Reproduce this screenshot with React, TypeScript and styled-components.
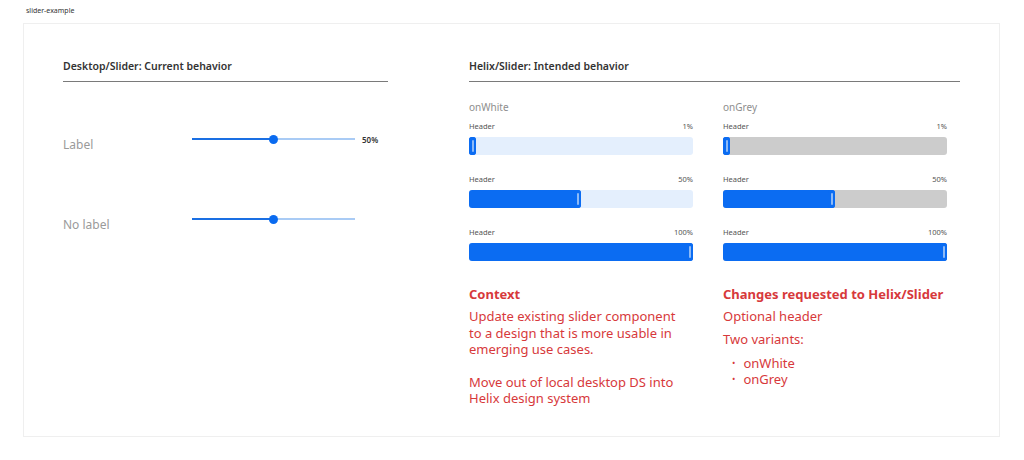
import React from 'react'
import styled, { createGlobalStyle } from 'styled-components'

const GlobalStyle = createGlobalStyle`
  html, body {
    margin: 0;
    padding: 0;
    background: #ffffff;
  }
  body {
    font-family: 'Noto Sans', 'Liberation Sans', sans-serif;
    color: #222;
  }
`

const Page = styled.div`
  width: 1024px;
  height: 460px;
  box-sizing: border-box;
  padding: 6px 24px 0 23px;
`

const Caption = styled.div`
  font-size: 7px;
  line-height: 9px;
  color: #333;
  padding-left: 3px;
  margin-bottom: 8px;
`

const Frame = styled.div`
  box-sizing: border-box;
  width: 977px;
  height: 414px;
  border: 1px solid #efefef;
  padding: 35px 39px 0 39px;
  display: flex;
  gap: 81px;
`

const Column = styled.section<{ width: number }>`
  width: ${({ width }) => width}px;
  flex: none;
  display: flex;
  flex-direction: column;
`

const SectionTitle = styled.h2`
  margin: 0;
  font-size: 10.5px;
  line-height: 14px;
  font-weight: 600;
  color: #333;
  padding-bottom: 8px;
  border-bottom: 1px solid #7a7a7a;
`

/* ---- current behaviour ---- */

const DesktopRow = styled.div<{ first?: boolean }>`
  display: flex;
  align-items: center;
  margin-top: ${({ first }) => (first ? '50px' : '66px')};
  height: 14px;
`

const DesktopLabel = styled.div`
  width: 129px;
  font-size: 12px;
  line-height: 14px;
  color: #9a9a9a;
  padding-top: 12px;
`

const DesktopTrack = styled.div`
  width: 163px;
  display: flex;
  align-items: center;
`

const TrackFill = styled.div`
  height: 2px;
  background: #1a6fe3;
`

const TrackRest = styled.div`
  flex: 1;
  height: 2px;
  background: #a9cbf5;
`

const Knob = styled.div`
  width: 9px;
  height: 9px;
  border-radius: 50%;
  background: #0a6bf0;
  margin: 0 -1px;
  position: relative;
  z-index: 1;
`

const DesktopValue = styled.div`
  margin-left: 7px;
  font-size: 8px;
  font-weight: 600;
  color: #333;
`

/* ---- intended behaviour ---- */

const VariantGrid = styled.div`
  display: grid;
  grid-template-columns: 224px 224px;
  column-gap: 30px;
  margin-top: 18px;
`

const Variant = styled.div`
  display: flex;
  flex-direction: column;
`

const VariantName = styled.div`
  font-size: 10px;
  line-height: 14px;
  color: #8e8e8e;
  margin-bottom: 7px;
`

const SliderBlock = styled.div`
  display: flex;
  flex-direction: column;
  gap: 6px;
  & + & {
    margin-top: 19px;
  }
`

const SliderHeader = styled.div`
  display: flex;
  justify-content: space-between;
  font-size: 7.5px;
  line-height: 10px;
  color: #555;
`

const Bar = styled.div<{ tone: 'white' | 'grey' }>`
  height: 18px;
  border-radius: 3px;
  background: ${({ tone }) => (tone === 'white' ? '#e4effd' : '#cccccc')};
  display: flex;
`

const BarFill = styled.div`
  height: 100%;
  border-radius: 3px;
  background: #0b6cf2;
  display: flex;
  justify-content: flex-end;
`

const Thumb = styled.div`
  width: 7px;
  height: 100%;
  box-sizing: border-box;
  border-radius: 3px;
  background: #0b6cf2;
  display: flex;
  align-items: center;
  justify-content: center;
  &::after {
    content: '';
    width: 2px;
    height: 12px;
    border-radius: 1px;
    background: #8dbaf7;
  }
`

const Notes = styled.div`
  display: grid;
  grid-template-columns: 224px 240px;
  column-gap: 30px;
  margin-top: 25px;
  color: #d7393b;
`

const NoteTitle = styled.div`
  font-size: 13px;
  line-height: 17px;
  font-weight: 700;
  margin-bottom: 5px;
`

const NoteText = styled.p<{ gap?: number }>`
  margin: 0 0 ${({ gap }) => gap ?? 16}px;
  max-width: 216px;
  font-size: 13px;
  line-height: 16.5px;
`

const BulletList = styled.ul`
  margin: 0;
  padding: 0 0 0 9px;
  list-style: none;
  font-size: 13px;
  line-height: 16px;
  li {
    display: flex;
    gap: 8px;
  }
  li::before {
    content: '•';
    font-size: 9px;
  }
`

function DesktopSlider({ label, value, showValue }: { label: string; value: number; showValue?: boolean }) {
  return (
    <>
      <DesktopLabel>{label}</DesktopLabel>
      <DesktopTrack>
        <TrackFill style={{ width: `calc(${value}% - 4px)` }} />
        <Knob />
        <TrackRest />
      </DesktopTrack>
      {showValue && <DesktopValue>{value}%</DesktopValue>}
    </>
  )
}

function HelixSlider({ value, tone }: { value: number; tone: 'white' | 'grey' }) {
  return (
    <SliderBlock>
      <SliderHeader>
        <span>Header</span>
        <span>{value}%</span>
      </SliderHeader>
      <Bar tone={tone}>
        <BarFill style={{ width: `max(${value}%, 7px)` }}>
          <Thumb />
        </BarFill>
      </Bar>
    </SliderBlock>
  )
}

const values = [1, 50, 100]

export default function App() {
  return (
    <Page>
      <GlobalStyle />
      <Caption>slider-example</Caption>
      <Frame>
        <Column width={325}>
          <SectionTitle>Desktop/Slider: Current behavior</SectionTitle>
          <DesktopRow first>
            <DesktopSlider label="Label" value={50} showValue />
          </DesktopRow>
          <DesktopRow>
            <DesktopSlider label="No label" value={50} />
          </DesktopRow>
        </Column>
        <Column width={491}>
          <SectionTitle>Helix/Slider: Intended behavior</SectionTitle>
          <VariantGrid>
            <Variant>
              <VariantName>onWhite</VariantName>
              {values.map(v => (
                <HelixSlider key={v} value={v} tone="white" />
              ))}
            </Variant>
            <Variant>
              <VariantName>onGrey</VariantName>
              {values.map(v => (
                <HelixSlider key={v} value={v} tone="grey" />
              ))}
            </Variant>
          </VariantGrid>
          <Notes>
            <div>
              <NoteTitle>Context</NoteTitle>
              <NoteText>Update existing slider component to a design that is more usable in emerging use cases.</NoteText>
              <NoteText>Move out of local desktop DS into Helix design system</NoteText>
            </div>
            <div>
              <NoteTitle>Changes requested to Helix/Slider</NoteTitle>
              <NoteText gap={6}>Optional header</NoteText>
              <NoteText gap={8}>Two variants:</NoteText>
              <BulletList>
                <li>onWhite</li>
                <li>onGrey</li>
              </BulletList>
            </div>
          </Notes>
        </Column>
      </Frame>
    </Page>
  )
}
